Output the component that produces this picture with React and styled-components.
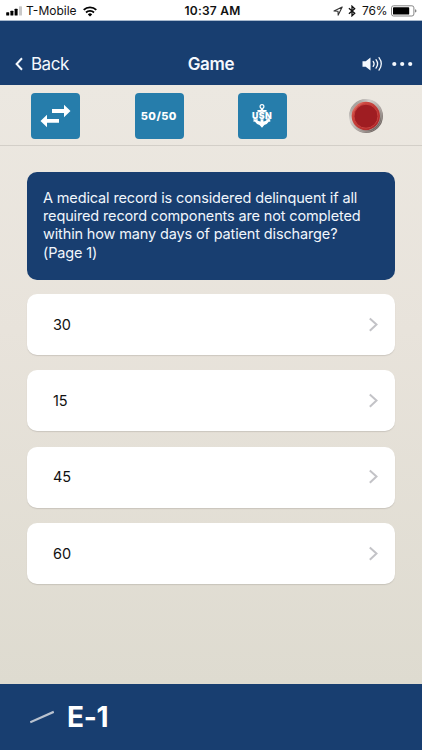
import React from "react";
import styled, { createGlobalStyle } from "styled-components";

const GlobalStyle = createGlobalStyle`
    * {
        box-sizing: border-box;
    }

    body {
        margin: 0;
        font-family: Inter, "Liberation Sans", sans-serif;
    }
`

const Screen = styled.div`
    width: 422px;
    height: 750px;
    display: flex;
    flex-direction: column;
    overflow: hidden;
    background: linear-gradient(#ece8e1 85px, #e8e3db 330px, #dedbd0 684px);
`

const StatusBar = styled.div`
    height: 21px;
    flex: none;
    display: grid;
    grid-template-columns: 1fr auto 1fr;
    align-items: center;
    padding: 1px 5px 0 6px;
    background: #fff;
    color: #111;
    font-size: 12px;
    line-height: 20px;
    border-bottom: 1px solid #a9bace;
`

const StatusGroup = styled.div`
    display: flex;
    align-items: center;
    justify-content: ${(p) => (p.$end ? "flex-end" : "flex-start")};

    svg {
        display: block;
        flex: none;
    }
`

const Carrier = styled.span`
    margin: 0 6px 0 3px;
    letter-spacing: 0;
`

const Clock = styled.span`
    padding-left: 2px;
    font-weight: 600;
    letter-spacing: 0.25px;
`

const Percent = styled.span`
    margin: 0 3.5px 0 6px;
    letter-spacing: -0.1px;
`

const Header = styled.header`
    height: 64px;
    flex: none;
    display: grid;
    grid-template-columns: 1fr auto 1fr;
    align-items: center;
    padding: 21px 9px 0;
    background: #183e70;
    color: #f4f8fd;
`

const BackButton = styled.button`
    display: flex;
    align-items: center;
    gap: 8px;
    padding: 0 0 0 6px;
    border: 0;
    background: none;
    color: inherit;
    font: 400 17px/20px Inter, sans-serif;
    letter-spacing: -0.5px;
`

const Title = styled.h1`
    margin: 0;
    font-size: 17px;
    line-height: 20px;
    font-weight: 600;
    letter-spacing: -0.3px;
`

const HeaderActions = styled.div`
    display: flex;
    justify-content: flex-end;
    align-items: center;
    gap: 9px;
`

const Toolbar = styled.div`
    height: 61px;
    flex: none;
    display: flex;
    align-items: center;
    gap: 54.4px;
    padding: 2px 0 0 31.4px;
    border-bottom: 1px solid #d3cfc8;
`

const Lifeline = styled.button`
    width: 49px;
    height: 46px;
    display: flex;
    align-items: center;
    justify-content: center;
    padding: 0 1px 0 0;
    border: 0;
    border-radius: 4px;
    background: #267dab;
    color: #fff;
    font: 800 11px/14px Inter, sans-serif;
    letter-spacing: 0.4px;
`

const RedButton = styled.button`
    width: 36px;
    height: 36px;
    margin-left: 6.5px;
    padding: 0;
    border: 0;
    background: none;
`

const Content = styled.main`
    flex: 1;
    display: flex;
    flex-direction: column;
    padding: 26px 27px 0;
`

const Question = styled.div`
    height: 108px;
    margin-bottom: 14px;
    padding: 16.8px 16px;
    border-radius: 10px;
    background: #183e70;
    color: #f1f6fc;
    font-size: 14.5px;
    line-height: 18.35px;
    letter-spacing: -0.14px;
    white-space: pre-line;
`

const Answers = styled.div`
    display: flex;
    flex-direction: column;
    gap: 15.35px;
`

const Answer = styled.button`
    height: 61px;
    display: flex;
    align-items: center;
    justify-content: space-between;
    padding: 0 16px 0 26px;
    border: 0;
    border-radius: 10px;
    background: #fff;
    box-shadow: 0 1px 1px rgba(100, 95, 90, 0.2);
    color: #111;
    font: 400 14.5px/18px Inter, sans-serif;
    letter-spacing: -0.1px;
`

const Footer = styled.footer`
    height: 66px;
    flex: none;
    display: flex;
    align-items: center;
    gap: 13px;
    padding-left: 30px;
    background: #183e70;
    color: #fff;
`

const Rank = styled.span`
    font-size: 28px;
    line-height: 34px;
    font-weight: 700;
    letter-spacing: -0.3px;
`

const question = `A medical record is considered delinquent if all
required record components are not completed
within how many days of patient discharge?
(Page 1)`

const answers = ["30", "15", "45", "60"];

const SignalIcon = () => (
    <svg width="17" height="10" viewBox="0 0 17 10">
        <rect x="0.2" y="6.2" width="3" height="3.3" rx="0.6" fill="#000" />
        <rect x="4.4" y="4.7" width="3" height="4.8" rx="0.6" fill="#000" />
        <rect x="8.6" y="2.7" width="3" height="6.8" rx="0.6" fill="#000" />
        <rect x="13" y="0.2" width="3" height="9.3" rx="0.6" fill="#c8c8c8" />
    </svg>
);

const WifiIcon = () => (
    <svg width="14" height="11" viewBox="0 0 14 11" fill="none" stroke="#000" strokeWidth="1.8">
        <path d="M0.7 3.9a9 9 0 0 1 12.6 0" />
        <path d="M3 6.5a5.7 5.7 0 0 1 8 0" />
        <path d="M7 10.6 4.8 8.4a3.1 3.1 0 0 1 4.4 0z" fill="#000" stroke="none" />
    </svg>
);

const LocationIcon = () => (
    <svg width="15" height="10" viewBox="0 0 15 10" fill="none" stroke="#333" strokeWidth="1.1" strokeLinejoin="round">
        <path d="M9.2 1 1 5l4 .2.2 3.9z" />
    </svg>
);

const BluetoothIcon = () => (
    <svg width="8" height="12" viewBox="0 0 8 12" fill="none" stroke="#111" strokeWidth="1.3">
        <path d="M0.9 3.3 6.7 8.3 4 10.8V1.2l2.7 2.5L0.9 8.7" />
    </svg>
);

const BatteryIcon = () => (
    <svg width="26" height="12" viewBox="0 0 26 12">
        <rect x="0.5" y="0.8" width="22.4" height="10.2" rx="2" fill="none" stroke="#858585" />
        <rect x="2" y="2.2" width="16.2" height="7.4" rx="0.7" fill="#000" />
        <path d="M24 4.2q1.5.3 1.5 1.7T24 7.6z" fill="#858585" />
    </svg>
);

const SoundIcon = () => (
    <svg width="21" height="16" viewBox="0 0 21 16" fill="none" stroke="#f4f8fd" strokeWidth="1.3" strokeLinecap="round">
        <path d="M0.5 5.2h3.2l4.8-3.8v13L3.7 10.7H0.5z" fill="#f4f8fd" stroke="none" />
        <path d="M11.2 5.4q1.8 2.5 0 5" />
        <path d="M14 3.7q3.2 4.2 0 8.4" />
        <path d="M17 1.7q4.6 6.1 0 12.4" />
    </svg>
);

const MoreIcon = () => (
    <svg width="21" height="6" viewBox="0 0 21 6" fill="#f4f8fd">
        <circle cx="2.3" cy="3" r="2.1" />
        <circle cx="10.2" cy="3" r="2.1" />
        <circle cx="18.2" cy="3" r="2.1" />
    </svg>
);

const SwapIcon = () => (
    <svg width="31" height="24" viewBox="0 0 31 24" fill="#fff">
        <path d="M12 5h12V0.8L30.5 7 24 13.2V9H12z" />
        <path d="M19 14.9H7v-4.2L.5 17 7 23.3v-4.6h12z" />
    </svg>
);

const Usn = styled.text`
    font: 900 9px Inter, sans-serif;
    fill: #fff;
    stroke: #267dab;
    stroke-width: 0.7px;
    paint-order: stroke;
`

const AnchorIcon = () => (
    <svg width="24" height="26" viewBox="0 0 24 26">
        <circle cx="12" cy="3.6" r="1.9" fill="none" stroke="#fff" strokeWidth="1.2" />
        <path d="M10.8 5.5h2.4v1.6h3.4v2.3h-3.2v9.2q2.2-.4 3.3-1.6l-1.3-1.2 5-2-.2 5.2-1.2-.5q-1.7 2.8-4.7 3.4L12 24.7l-2.5-2.8q-3-.6-4.7-3.4l-1.2.5-.2-5.2 5 2L7.1 17q1.1 1.2 3.5 1.6V9.4H7.4V7.1h3.4z" fill="#fff" />
        <Usn x="12" y="15.7" textAnchor="middle" textLength="20" lengthAdjust="spacingAndGlyphs">USN</Usn>
    </svg>
);

const BuzzerIcon = () => (
    <svg width="36" height="36" viewBox="0 0 36 36">
        <defs>
            <linearGradient id="rim" x1="0" y1="0" x2="1" y2="1">
                <stop offset="0" stopColor="#77716e" />
                <stop offset="0.3" stopColor="#d5d2ce" />
                <stop offset="0.65" stopColor="#a49b97" />
                <stop offset="1" stopColor="#504642" />
            </linearGradient>
            <linearGradient id="cap" x1="0" y1="0" x2="1" y2="1">
                <stop offset="0" stopColor="#f1a394" />
                <stop offset="0.25" stopColor="#ce4941" />
                <stop offset="1" stopColor="#a81f24" />
            </linearGradient>
        </defs>
        <circle cx="18" cy="18" r="16.4" fill="#c2beb9" stroke="url(#rim)" strokeWidth="1.2" />
        <circle cx="18" cy="18" r="15" fill="none" stroke="url(#rim)" strokeWidth="1.5" />
        <circle cx="17.8" cy="18" r="14.2" fill="url(#cap)" />
        <circle cx="18" cy="18.2" r="12" fill="#9f1d22" stroke="#c9413e" strokeWidth="1" />
    </svg>
);

const Chevron = () => (
    <svg width="11" height="16" viewBox="0 0 11 16" fill="none" stroke="#c3c3c7" strokeWidth="2">
        <path d="m1.8 1.4 6.7 6.2-6.7 6.2" />
    </svg>
);

export default function App() {
    return (
        <Screen>
            <GlobalStyle />
            <StatusBar>
                <StatusGroup>
                    <SignalIcon />
                    <Carrier>T-Mobile</Carrier>
                    <WifiIcon />
                </StatusGroup>
                <Clock>10:37 AM</Clock>
                <StatusGroup $end>
                    <LocationIcon />
                    <BluetoothIcon />
                    <Percent>76%</Percent>
                    <BatteryIcon />
                </StatusGroup>
            </StatusBar>
            <Header>
                <BackButton>
                    <svg width="8" height="14" viewBox="0 0 8 14" fill="none" stroke="#f4f8fd" strokeWidth="2">
                        <path d="M7 1.2 1.6 7 7 12.8" />
                    </svg>
                    Back
                </BackButton>
                <Title>Game</Title>
                <HeaderActions>
                    <SoundIcon />
                    <MoreIcon />
                </HeaderActions>
            </Header>
            <Toolbar>
                <Lifeline><SwapIcon /></Lifeline>
                <Lifeline>50/50</Lifeline>
                <Lifeline><AnchorIcon /></Lifeline>
                <RedButton><BuzzerIcon /></RedButton>
            </Toolbar>
            <Content>
                <Question>{question}</Question>
                <Answers>
                    {answers.map((answer) => (
                        <Answer key={answer}>
                            {answer}
                            <Chevron />
                        </Answer>
                    ))}
                </Answers>
            </Content>
            <Footer>
                <svg width="24" height="14" viewBox="0 0 24 14">
                    <path d="M0.2 12.3 23.8 1.8" stroke="#b9c2cf" strokeWidth="2.3" />
                </svg>
                <Rank>E-1</Rank>
            </Footer>
        </Screen>
    );
}
